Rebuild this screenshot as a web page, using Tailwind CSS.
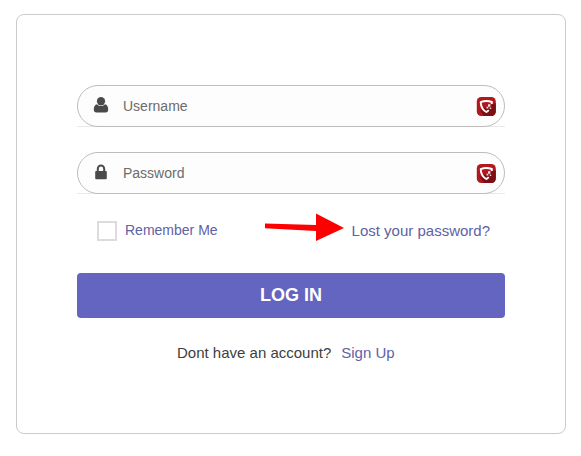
<!DOCTYPE html>
<html lang="en">

<head>
    <meta charset="UTF-8">
    <meta name="viewport" content="width=device-width, initial-scale=1.0">
    <script src="https://cdn.jsdelivr.net/npm/@tailwindcss/browser@4"></script>
    <title>Log In</title>
</head>

<body class="bg-white pt-[14px] pl-4 font-['Liberation_Sans',Arial,sans-serif]">
    <!-- badge shown inside both fields -->
    <svg class="hidden">
        <symbol id="badge" viewBox="0 0 20 20">
            <rect x="0.800" y="1" width="19" height="19" rx="4.500" fill="#b0181d" />
            <path d="M19.800 7V15.500a4.500 4.500 0 0 1-4.500 4.500H8L4 14z" fill="#7d0f14" />
            <path d="M12.800 14.200C11.800 15.300 11.200 15.700 10.300 16C6.800 14 4.900 10.800 4.700 6.200C8.200 4.600 12.200 4.600 15.900 6L15.700 8" fill="none" stroke="#fff" stroke-width="1.900" stroke-linejoin="round" />
            <path d="M12 8.300h2.400v2.400h-2.400zM10.500 10.800h1.800v1.800h-1.800zM13.800 11.600h1.400v1.400h-1.400z" fill="#f3dcdc" />
        </symbol>
    </svg>

    <main class="w-[550px] h-[420px] rounded-lg border border-[#cacaca] px-[60px] pt-[70px]">
        <form>
            <div class="h-[42px] border-b border-[#e9e9e9]">
                <label class="flex items-center h-[42px] rounded-full border border-[#bdbdbd] bg-[#fdfdfd] pl-[15px] pr-2">
                    <svg class="w-4 h-4 mb-[3px]" viewBox="0 0 16 16" fill="#4a4a4a">
                        <ellipse cx="8" cy="4.300" rx="4.100" ry="4.200" />
                        <path d="M4 7.200C1.900 7.600 0.800 9.500 0.800 12.600C0.800 14.500 1.700 15.600 3.500 15.600h9C14.300 15.600 15.200 14.500 15.200 12.600C15.200 9.500 14.100 7.600 12 7.200C9.800 9.700 6.200 9.700 4 7.200z" />
                    </svg>
                    <input type="text" placeholder="Username"
                        class="flex-1 min-w-0 ml-[14px] text-sm outline-none placeholder:text-[#6c6c6c]">
                    <svg class="size-5"><use href="#badge" /></svg>
                </label>
            </div>
            <div class="h-[42px] mt-[25px] border-b border-[#e9e9e9]">
                <label class="flex items-center h-[42px] rounded-full border border-[#bdbdbd] bg-[#fdfdfd] pl-[15px] pr-2">
                    <svg class="w-4 h-4 mb-[3px]" viewBox="0 0 16 16">
                        <path d="M4.800 8V4.900a3.200 3.400 0 0 1 6.400 0V8" fill="none" stroke="#4a4a4a" stroke-width="2" />
                        <rect x="2.200" y="7" width="11.600" height="8.200" rx="0.900" fill="#4a4a4a" />
                    </svg>
                    <input type="text" placeholder="Password"
                        class="flex-1 min-w-0 ml-[14px] text-sm outline-none placeholder:text-[#6c6c6c]">
                    <svg class="size-5"><use href="#badge" /></svg>
                </label>
            </div>

            <div class="flex h-5 mt-[27px] pl-5 pr-[15px] text-[#5f61a6]">
                <input type="checkbox" class="appearance-none size-5 border-2 border-[#dcdcdc] bg-white">
                <span class="ml-2 -mt-px text-sm leading-5">Remember Me</span>
                <svg class="w-[79px] h-7 ml-[47px] -mt-[8px]" viewBox="0 0 79 28" fill="#fe0000">
                    <path d="M0 10.500L51 12V0.500L79 15L51 28V18L0 15.300z" />
                </svg>
                <a href="#" class="ml-auto text-[15px] leading-5 whitespace-nowrap">Lost your password?</a>
            </div>

            <button type="button"
                class="block w-full h-[45px] mt-8 pb-[2px] rounded bg-[#6465c0] text-white text-lg font-bold leading-5">LOG IN</button>

            <p class="mt-[25px] pl-[100px] text-[15px] leading-5 text-[#404040]">Dont have an account?<a href="#" class="ml-[10px] text-[#5f61a6]">Sign Up</a></p>
        </form>
    </main>
</body>

</html>
